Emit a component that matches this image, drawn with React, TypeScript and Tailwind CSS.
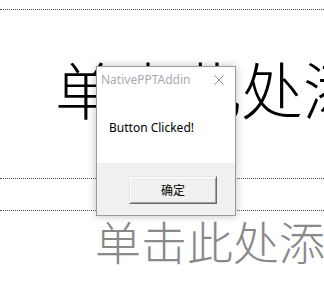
export default function App() {
  return (
    <div className="relative w-[324px] h-[286px] overflow-hidden bg-white">
      {/* slide placeholders */}
      <div className="pt-[9px]">
        <div className="h-[170px] border-y border-dotted border-[#555] pl-[55px] pt-[47px]">
          <div className="whitespace-nowrap text-[62px] leading-none font-light text-black font-['Noto_Sans_CJK_SC',sans-serif]">
            单击此处添加标题
          </div>
        </div>
        <div className="mt-[31px] border-t border-dotted border-[#555] pl-[95px] pt-[6px]">
          <div className="whitespace-nowrap text-[46px] leading-none font-light text-[#898989] font-['Noto_Sans_CJK_SC',sans-serif]">
            单击此处添加副标题
          </div>
        </div>
      </div>

      {/* message box */}
      <div className="absolute left-[96px] top-[66px] w-[140px] h-[150px] flex flex-col border border-[#9b9b9b] bg-white shadow-[0_0_8px_rgba(0,0,0,0.25)] font-['Noto_Sans','Noto_Sans_CJK_SC',sans-serif]">
        <div className="h-[26px] flex items-center justify-between pl-[4px] pr-[11px]">
          <span className="text-[12px] text-[#a3acb7]">NativePPTAddin</span>
          <svg width="10" height="10" viewBox="0 0 10 10">
            <path d="M0.5 0.5L9.5 9.5M9.5 0.5L0.5 9.5" stroke="#8a8a8a" strokeWidth="1" fill="none" />
          </svg>
        </div>
        <div className="flex-1 pl-[12px] pt-[27px] text-[12px] leading-4 text-black">
          Button Clicked!
        </div>
        <div className="h-[52px] flex justify-end pt-[13px] pr-[18px] bg-[#f0f0f0]">
          <button
            type="button"
            className="w-[88px] h-[28px] flex items-center justify-center border border-t-[#e3e3e3] border-l-[#e3e3e3] border-r-[#696969] border-b-[#696969] bg-[#f0f0f0] shadow-[inset_1px_1px_0_#fff,inset_-1px_-1px_0_#a0a0a0] text-[12px] text-black font-['Noto_Sans_CJK_SC',sans-serif]"
          >
            确定
          </button>
        </div>
      </div>
    </div>
  );
}
